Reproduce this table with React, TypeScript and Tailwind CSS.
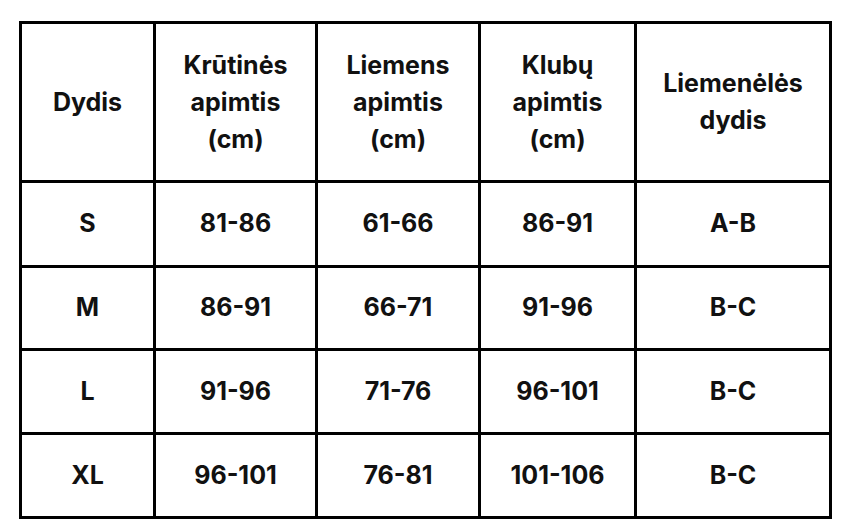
import React from 'react';

const headers = [
  ['Dydis'],
  ['Krūtinės', 'apimtis', '(cm)'],
  ['Liemens', 'apimtis', '(cm)'],
  ['Klubų', 'apimtis', '(cm)'],
  ['Liemenėlės', 'dydis'],
];

const rows = [
  ['S', '81-86', '61-66', '86-91', 'A-B'],
  ['M', '86-91', '66-71', '91-96', 'B-C'],
  ['L', '91-96', '71-76', '96-101', 'B-C'],
  ['XL', '96-101', '76-81', '101-106', 'B-C'],
];

const App: React.FC = () => {
  return (
    <div className="w-[858px] h-[532px] bg-white pl-[19px] pt-[21px]" style={{ fontFamily: 'Inter, "Noto Sans", sans-serif' }}>
      <div className="grid grid-cols-[134px_162px_163px_156px_195px] grid-rows-[159px_85px_83px_84px_84px] w-max border-l-[3px] border-t-[3px] border-black text-[#111] font-bold text-[25px]">
        {headers.map((lines, i) => (
          <div key={i} className="flex flex-col items-center justify-center border-r-[3px] border-b-[3px] border-black text-center leading-[37px]">
            {lines.map(l => (
              <span key={l}>{l}</span>
            ))}
          </div>
        ))}
        {rows.map(row =>
          row.map((cell, j) => (
            <div key={row[0] + j} className="flex items-center justify-center border-r-[3px] border-b-[3px] border-black">
              {cell}
            </div>
          ))
        )}
      </div>
    </div>
  );
};

export default App;
